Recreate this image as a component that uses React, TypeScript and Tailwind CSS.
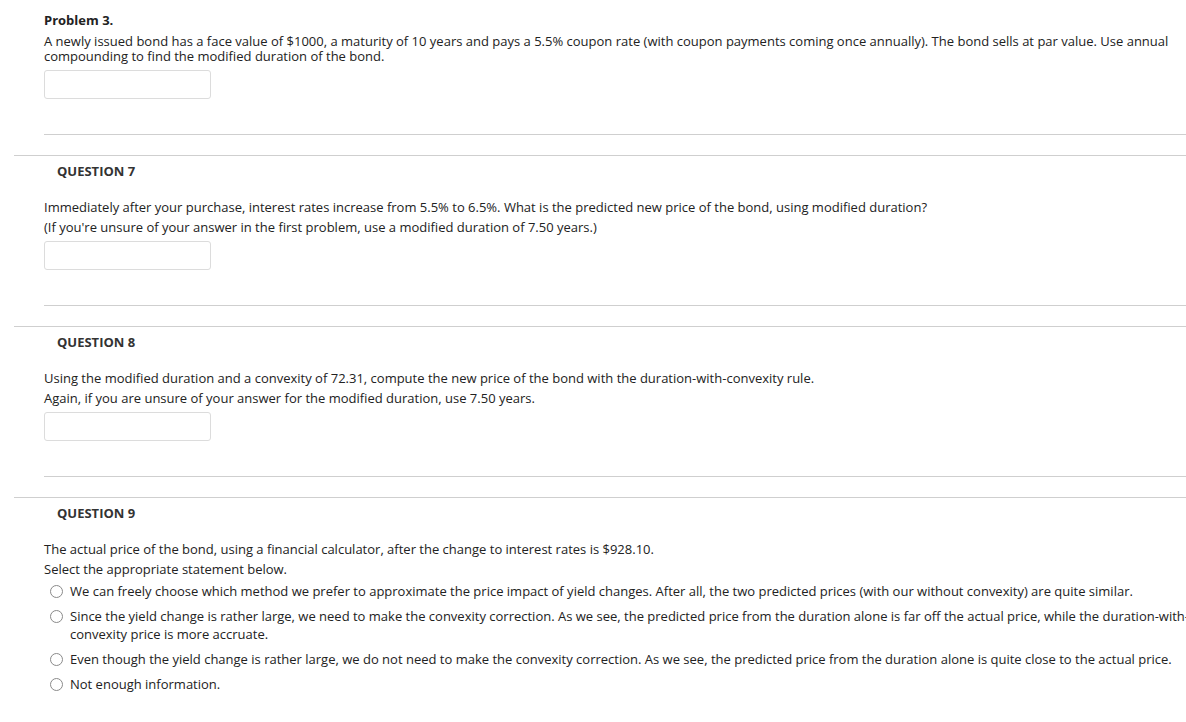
import React from 'react';

const Radio: React.FC = () => (
  <span className="mt-[3px] inline-block h-[13px] w-[13px] shrink-0 rounded-full border border-[#8a8a8a] bg-white" />
);

const AnswerBox: React.FC = () => (
  <div className="ml-[44px] h-[29px] w-[167px] rounded-[3px] border border-[#dcdcdc] bg-white" />
);

type QuestionProps = {
  num: number;
  lines: string[];
  children?: React.ReactNode;
};

const Question: React.FC<QuestionProps> = ({ num, lines, children }) => (
  <section className="ml-[14px] border-t border-[#cfcfcf]">
    <h3 className="ml-[43px] mt-[7px] text-[13px] font-bold leading-[16px] text-[#333]">QUESTION {num}</h3>
    <div className="ml-[30px] mt-[18px] text-[13px] leading-[20px] text-[#222]">
      {lines.map((l) => (
        <p key={l}>{l}</p>
      ))}
    </div>
    {children}
  </section>
);

const options = [
  'We can freely choose which method we prefer to approximate the price impact of yield changes. After all, the two predicted prices (with our without convexity) are quite similar.',
  'Since the yield change is rather large, we need to make the convexity correction. As we see, the predicted price from the duration alone is far off the actual price, while the duration-with-convexity price is more accruate.',
  'Even though the yield change is rather large, we do not need to make the convexity correction. As we see, the predicted price from the duration alone is quite close to the actual price.',
  'Not enough information.',
];

export default function App() {
  return (
    <div className="h-[722px] w-[1186px] overflow-hidden bg-white" style={{ fontFamily: '"Open Sans", sans-serif' }}>
      <div className="w-[1200px]">
        <div className="pt-[13px]">
          <p className="ml-[44px] text-[13px] font-bold leading-[15px] text-[#222]">Problem 3.</p>
          <p className="ml-[44px] mt-[6px] w-[1140px] text-[13px] leading-[15px] text-[#222]">
            A newly issued bond has a face value of $1000, a maturity of 10 years and pays a 5.5% coupon rate (with coupon payments coming once annually). The bond sells at par value. Use annual compounding to find the modified duration of the bond.
          </p>
          <div className="mt-[6px]">
            <AnswerBox />
          </div>
          <div className="ml-[44px] mt-[35px] border-t border-[#cfcfcf]" />
          <div className="h-[20px]" />
        </div>

        <Question
          num={7}
          lines={[
            'Immediately after your purchase, interest rates increase from 5.5% to 6.5%. What is the predicted new price of the bond, using modified duration?',
            "(If you're unsure of your answer in the first problem, use a modified duration of 7.50 years.)",
          ]}
        >
          <div className="mt-[4px] -ml-[14px]">
            <AnswerBox />
          </div>
          <div className="ml-[30px] mt-[35px] border-t border-[#cfcfcf]" />
          <div className="h-[20px]" />
        </Question>

        <Question
          num={8}
          lines={[
            'Using the modified duration and a convexity of 72.31, compute the new price of the bond with the duration-with-convexity rule.',
            'Again, if you are unsure of your answer for the modified duration, use 7.50 years.',
          ]}
        >
          <div className="mt-[4px] -ml-[14px]">
            <AnswerBox />
          </div>
          <div className="ml-[30px] mt-[35px] border-t border-[#cfcfcf]" />
          <div className="h-[20px]" />
        </Question>

        <Question
          num={9}
          lines={[
            'The actual price of the bond, using a financial calculator, after the change to interest rates is $928.10.',
            'Select the appropriate statement below.',
          ]}
        >
          <ul className="ml-[36px] mt-[3px] flex w-[1150px] flex-col gap-[7px] text-[13px] leading-[18px] text-[#222]">
            {options.map((o) => (
              <li key={o} className="flex items-start gap-[7px]">
                <Radio />
                <span>{o}</span>
              </li>
            ))}
          </ul>
        </Question>
      </div>
    </div>
  );
}
